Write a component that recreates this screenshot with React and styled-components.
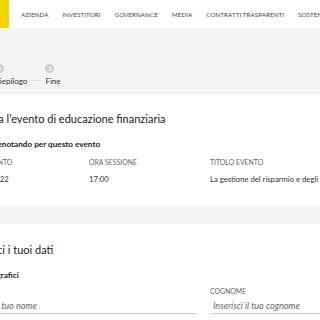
import styled, { createGlobalStyle } from "styled-components";

const GlobalStyle = createGlobalStyle`
  body {
    margin: 0;
    background: #fff;
    font-family: Lato, "Open Sans", sans-serif;
    color: #222;
    overflow: hidden;
  }
`;

const Header = styled.header`
  display: flex;
  align-items: center;
  height: 28px;
  background: #fff;
`;

const Logo = styled.div`
  width: 9px;
  height: 28px;
  background: #f2d500;
  flex-shrink: 0;
`;

const Nav = styled.nav`
  display: flex;
  gap: 14px;
  margin-left: 12px;
  white-space: nowrap;
`;

const NavItem = styled.a`
  font-size: 6.2px;
  letter-spacing: 0.1px;
  text-transform: uppercase;
  color: #444;
  text-decoration: none;
`;

const StepBand = styled.div`
  background: #f4f4f4;
  height: 66px;
  border-bottom: 1px solid #ececec;
  box-sizing: border-box;
  padding-top: 36px;
`;

const Shifted = styled.div`
  margin-left: -34px;
  width: 480px;
`;

const Stepper = styled.div`
  display: flex;
  align-items: flex-end;
  margin-left: -4px;
`;

const Step = styled.div`
  display: flex;
  flex-direction: column;
  align-items: flex-start;
  gap: 3px;
`;

const Circle = styled.span`
  width: 9px;
  height: 9px;
  border-radius: 50%;
  background: ${(p) => (p.$active ? "#f2d500" : "#cfcfcf")};
  color: #fff;
  font-size: 6px;
  font-weight: 700;
  display: flex;
  align-items: center;
  justify-content: center;
`;

const StepLabel = styled.span`
  font-size: 8px;
  line-height: 10px;
  color: #333;
`;

const StepLine = styled.span`
  width: 10px;
  height: 1px;
  background: #e2e2e2;
  margin: 0 4px 5px;
`;

const Section = styled.section`
  padding: ${(p) => p.$pad};
`;

const Title = styled.h2`
  margin: 0;
  font-size: 11px;
  line-height: 14px;
  font-weight: 400;
  color: #222;
`;

const SubTitle = styled.h3`
  margin: ${(p) => p.$mb || "13px 0 9px"};
  font-size: 8.2px;
  line-height: 10px;
  font-weight: 700;
  color: #222;
`;

const Grid = styled.div`
  display: grid;
  grid-template-columns: 123px 121px 200px;
`;

const Cell = styled.div`
  display: flex;
  flex-direction: column;
  gap: 8px;
`;

const Label = styled.span`
  font-size: 6.9px;
  line-height: 8px;
  text-transform: uppercase;
  color: #666;
  white-space: nowrap;
`;

const Value = styled.span`
  font-size: 7.7px;
  line-height: 10px;
  color: #333;
  white-space: nowrap;
`;

const Divider = styled.div`
  height: 18px;
  background: #f4f4f4;
`;

const FormRow = styled.div`
  display: grid;
  grid-template-columns: 237px 240px;
  gap: 13px;
  margin-left: -6px;
`;

const Field = styled.label`
  display: flex;
  flex-direction: column;
  gap: 3px;
`;

const Input = styled.input`
  font-family: inherit;
  font-size: 9px;
  height: 16px;
  padding: 0 3px;
  border: none;
  border-bottom: 1px solid #cfcfcf;
  outline: none;
  color: #333;
  box-sizing: border-box;

  &::placeholder {
    font-style: italic;
    color: #666;
  }
`;

export default function App() {
  const nav = ["Azienda", "Investitori", "Governance", "Media", "Contratti trasparenti", "Sostenibilità"];

  return (
    <>
      <GlobalStyle />
      <Header>
        <Logo />
        <Nav>
          {nav.map((n) => (
            <NavItem key={n} href="#">
              {n}
            </NavItem>
          ))}
        </Nav>
      </Header>
      <StepBand>
        <Shifted>
          <Stepper>
            <Step>
              <Circle $active>1</Circle>
              <StepLabel>Dati</StepLabel>
            </Step>
            <StepLine />
            <Step>
              <Circle>2</Circle>
              <StepLabel>Riepilogo</StepLabel>
            </Step>
            <StepLine />
            <Step>
              <Circle>3</Circle>
              <StepLabel>Fine</StepLabel>
            </Step>
          </Stepper>
        </Shifted>
      </StepBand>
      <Section $pad="18px 0 22px">
        <Shifted>
          <Title>Prenota l’evento di educazione finanziaria</Title>
          <SubTitle>Ti stai prenotando per questo evento</SubTitle>
          <Grid>
            <Cell>
              <Label>Data evento</Label>
              <Value>12/10/2022</Value>
            </Cell>
            <Cell>
              <Label>Ora sessione</Label>
              <Value>17:00</Value>
            </Cell>
            <Cell>
              <Label>Titolo evento</Label>
              <Value>La gestione del risparmio e degli investimenti</Value>
            </Cell>
          </Grid>
        </Shifted>
      </Section>
      <Divider />
      <Section $pad="19px 0 0">
        <Shifted>
          <Title>Inserisci i tuoi dati</Title>
          <SubTitle $mb="13px 0 7px">Dati anagrafici</SubTitle>
          <FormRow>
            <Field>
              <Label>Nome</Label>
              <Input placeholder="Inserisci il tuo nome" />
            </Field>
            <Field>
              <Label>Cognome</Label>
              <Input placeholder="Inserisci il tuo cognome" />
            </Field>
          </FormRow>
        </Shifted>
      </Section>
    </>
  );
}
